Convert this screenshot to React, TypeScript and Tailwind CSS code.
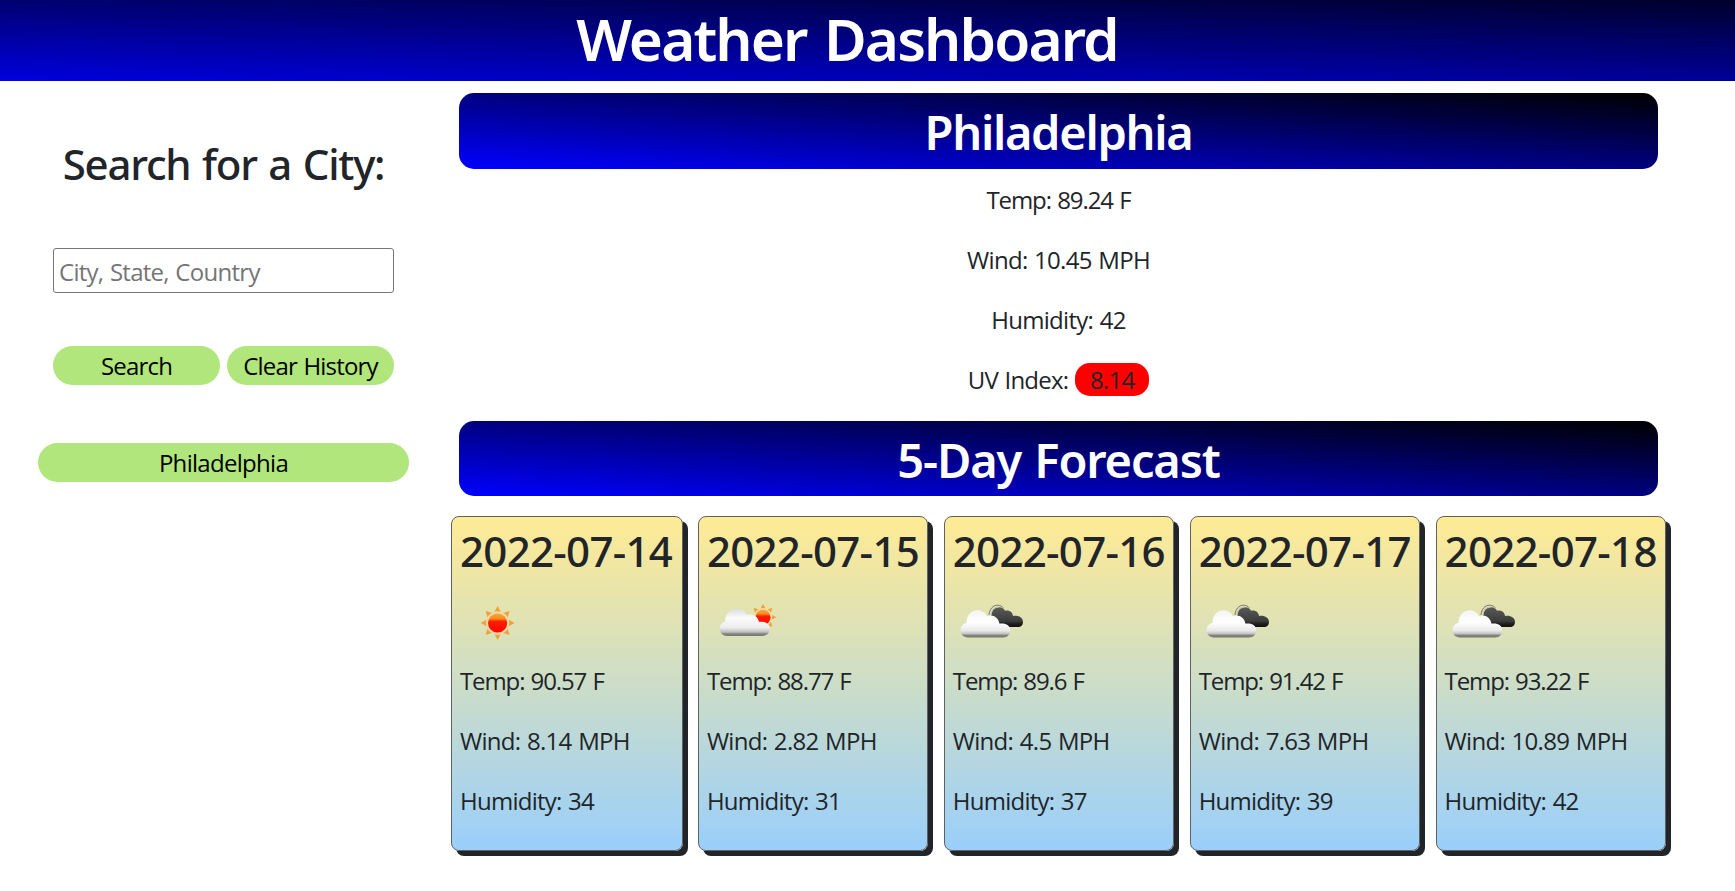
import React from "react";

type Sky = "clear" | "few" | "broken";

interface Day {
  date: string;
  sky: Sky;
  temp: string;
  wind: string;
  humidity: string;
}

const days: Day[] = [
  { date: "2022-07-14", sky: "clear", temp: "90.57", wind: "8.14", humidity: "34" },
  { date: "2022-07-15", sky: "few", temp: "88.77", wind: "2.82", humidity: "31" },
  { date: "2022-07-16", sky: "broken", temp: "89.6", wind: "4.5", humidity: "37" },
  { date: "2022-07-17", sky: "broken", temp: "91.42", wind: "7.63", humidity: "39" },
  { date: "2022-07-18", sky: "broken", temp: "93.22", wind: "10.89", humidity: "42" },
];

function Sun({ cx, cy, scale }: { cx: number; cy: number; scale: number }) {
  return (
    <g transform={`translate(${cx} ${cy}) scale(${scale})`}>
      {[0, 45, 90, 135, 180, 225, 270, 315].map((a) => (
        <path key={a} d="M-3.2 -11.4 Q0 -12.6 3.2 -11.4 L0 -17.3 Z" fill="#f0a136" transform={`rotate(${a})`} />
      ))}
      <circle r="10.8" fill="#fbd39a" />
      <circle r="9.8" fill="url(#sunFill)" />
    </g>
  );
}

function SkyIcon({ sky }: { sky: Sky }) {
  return (
    <svg className="mt-[9px] block size-[75px]" viewBox="0 0 75 75">
      <defs>
        <linearGradient id="sunFill" x1="0" y1="0" x2="0" y2="1">
          <stop offset="0" stopColor="#f9a93a" />
          <stop offset="0.28" stopColor="#f98a1c" />
          <stop offset="0.42" stopColor="#ff1e00" />
          <stop offset="1" stopColor="#ff0400" />
        </linearGradient>
        <linearGradient id="cloudFill" x1="0" y1="0" x2="0" y2="1">
          <stop offset="0" stopColor="#f4f4f4" />
          <stop offset="0.45" stopColor="#ffffff" />
          <stop offset="0.75" stopColor="#e9e9e9" />
          <stop offset="0.86" stopColor="#c4c4c4" />
          <stop offset="0.92" stopColor="#858580" />
          <stop offset="1" stopColor="#77776f" />
        </linearGradient>
        <linearGradient id="fewFill" x1="0" y1="0" x2="0" y2="1">
          <stop offset="0" stopColor="#dcdcdc" />
          <stop offset="0.35" stopColor="#fbfbfb" />
          <stop offset="0.7" stopColor="#ededed" />
          <stop offset="0.86" stopColor="#bdbdbd" />
          <stop offset="0.92" stopColor="#858580" />
          <stop offset="1" stopColor="#77776f" />
        </linearGradient>
        <linearGradient id="darkFill" x1="0" y1="0" x2="0" y2="1">
          <stop offset="0" stopColor="#5a5a5a" />
          <stop offset="0.7" stopColor="#3c3c3c" />
          <stop offset="0.85" stopColor="#1c1c1c" />
          <stop offset="1" stopColor="#111111" />
        </linearGradient>
      </defs>
      {sky === "clear" && <Sun cx={37.6} cy={38} scale={0.98} />}
      {sky === "few" && (
        <>
          <Sun cx={56} cy={32.3} scale={0.77} />
          <path
            d="M20 51 C15 51 12.8 47 12.8 43.5 C12.8 40 15 37.3 18 36.5 C18 29 23 23.5 30 23.5 C34.5 23.5 38 26 39.6 29.6 C45 28 51 31 52 36.8 C58 36 62.8 38.6 62.8 43.3 C62.8 47.5 60 51 55.5 51 Z"
            fill="url(#fewFill)"
          />
        </>
      )}
      {sky === "broken" && (
        <>
          <path
            d="M38.5 34 C37.5 28 40 22.6 45.5 22.3 C49 22.2 51 23.4 52 25.8 C56 24.6 59.5 27 60 31 C65 30 70 32.4 70 37 C70 40 68 42 65 42 L45 42 Z"
            fill="url(#darkFill)"
          />
          <path d="M36 30 C36.4 24 40 20.2 44.5 20.2 C47 20.2 49 21.2 50.2 22.8" fill="none" stroke="#77776f" strokeWidth="1" />
          <path d="M38 30 C38.3 25 41.4 22.2 45.4 22.2" fill="none" stroke="#c0c0b4" strokeWidth="1.3" />
          <path
            d="M15 52.5 C10.3 52.5 7.5 49 7.5 45.3 C7.5 41.5 10 38.6 13.6 38 C13 31 18 25.2 24.5 25.2 C29 25.2 32.3 27.6 34 31.3 C39.5 28.8 45.6 32.6 46.4 38.6 C52.5 37.6 57.3 40.4 57.3 45.3 C57.3 49.3 54.6 52.5 50 52.5 Z"
            fill="url(#cloudFill)"
          />
        </>
      )}
    </svg>
  );
}

function Banner({ children, className }: { children: React.ReactNode; className: string }) {
  return (
    <h2
      className={`ml-2 w-[1199px] rounded-[15px] bg-[linear-gradient(to_top_right,#0000ff,#000000)] text-center font-['Noto_Sans',sans-serif] text-[47px] font-semibold text-white ${className}`}
    >
      {children}
    </h2>
  );
}

export default function App() {
  return (
    <div className="h-[891px] w-full bg-white font-['Open_Sans',sans-serif] text-2xl text-[#212529]">
      <header className="h-[81px] bg-[linear-gradient(1.7deg,#0000dd,#00002b)] pr-[41px] text-center text-white">
        <h1 className="font-['Noto_Sans',sans-serif] text-[58.5px] leading-[76px] font-semibold tracking-[-1.9px] [word-spacing:4px]">
          Weather Dashboard
        </h1>
      </header>

      <div className="flex">
        <aside className="flex w-[447px] shrink-0 flex-col items-center pt-[58px]">
          <h2 className="font-['Noto_Sans',sans-serif] text-[42px] leading-[50px] font-medium tracking-[-1.25px] [word-spacing:2px]">
            Search for a City:
          </h2>
          <input
            className="mt-[59px] h-[45px] w-[341px] rounded-[3px] border border-[#767676] px-[5px] pt-[2px] tracking-[-0.72px] [word-spacing:1px] placeholder:text-[#757575]"
            placeholder="City, State, Country"
          />
          <div className="mt-[53px] flex gap-[7px] text-black">
            <button className="h-[39px] w-[167px] rounded-[20px] bg-[#b0e67c] leading-[39px] tracking-[-0.8px]">
              Search
            </button>
            <button className="h-[39px] w-[167px] rounded-[20px] bg-[#b0e67c] leading-[39px] tracking-[-0.8px] [word-spacing:1px]">
              Clear History
            </button>
          </div>
          <button className="mt-[58px] h-[39px] w-[371px] rounded-[20px] bg-[#b0e67c] leading-[40px] tracking-[-0.7px] text-black">
            Philadelphia
          </button>
        </aside>

        <main className="ml-1 w-[1216px] pt-3 leading-9">
          <Banner className="h-[76px] leading-[78px] tracking-[-1.3px]">Philadelphia</Banner>
          <div className="flex h-[252px] w-[1215px] flex-col pt-[13px] text-center">
            <p className="h-[60px] tracking-[-1.1px] [word-spacing:1.2px]">Temp: 89.24 F</p>
            <p className="h-[60px] tracking-[-0.7px] [word-spacing:1px]">Wind: 10.45 MPH</p>
            <p className="h-[60px] tracking-[-0.7px] [word-spacing:1px]">Humidity: 42</p>
            <p className="tracking-[-0.75px] [word-spacing:1px]">
              UV Index: <span className="rounded-[15px] bg-[#ff0000] px-[15px]">8.14</span>
            </p>
          </div>
          <Banner className="h-[75px] leading-[78px] tracking-[-1.15px] [word-spacing:2px]">5-Day Forecast</Banner>

          <div className="mt-5 grid grid-cols-[231.5px_repeat(4,230.5px)] gap-[15.4px]">
            {days.map((d) => (
              <section
                key={d.date}
                className="h-[335px] rounded-lg border border-[#5f6163] bg-[linear-gradient(#ffeb94,#9acffb)] px-2 pt-[9px] whitespace-nowrap shadow-[5px_5px_0_#212529]"
              >
                <h3 className="font-['Noto_Sans',sans-serif] text-[42px] leading-[50px] font-medium tracking-[-0.7px]">
                  {d.date}
                </h3>
                <SkyIcon sky={d.sky} />
                <p className="mt-[3px] h-[60px] tracking-[-1.1px] [word-spacing:1px]">Temp: {d.temp} F</p>
                <p className="h-[60px] tracking-[-0.7px] [word-spacing:1px]">Wind: {d.wind} MPH</p>
                <p className="tracking-[-0.75px] [word-spacing:1px]">Humidity: {d.humidity}</p>
              </section>
            ))}
          </div>
        </main>
      </div>
    </div>
  );
}
